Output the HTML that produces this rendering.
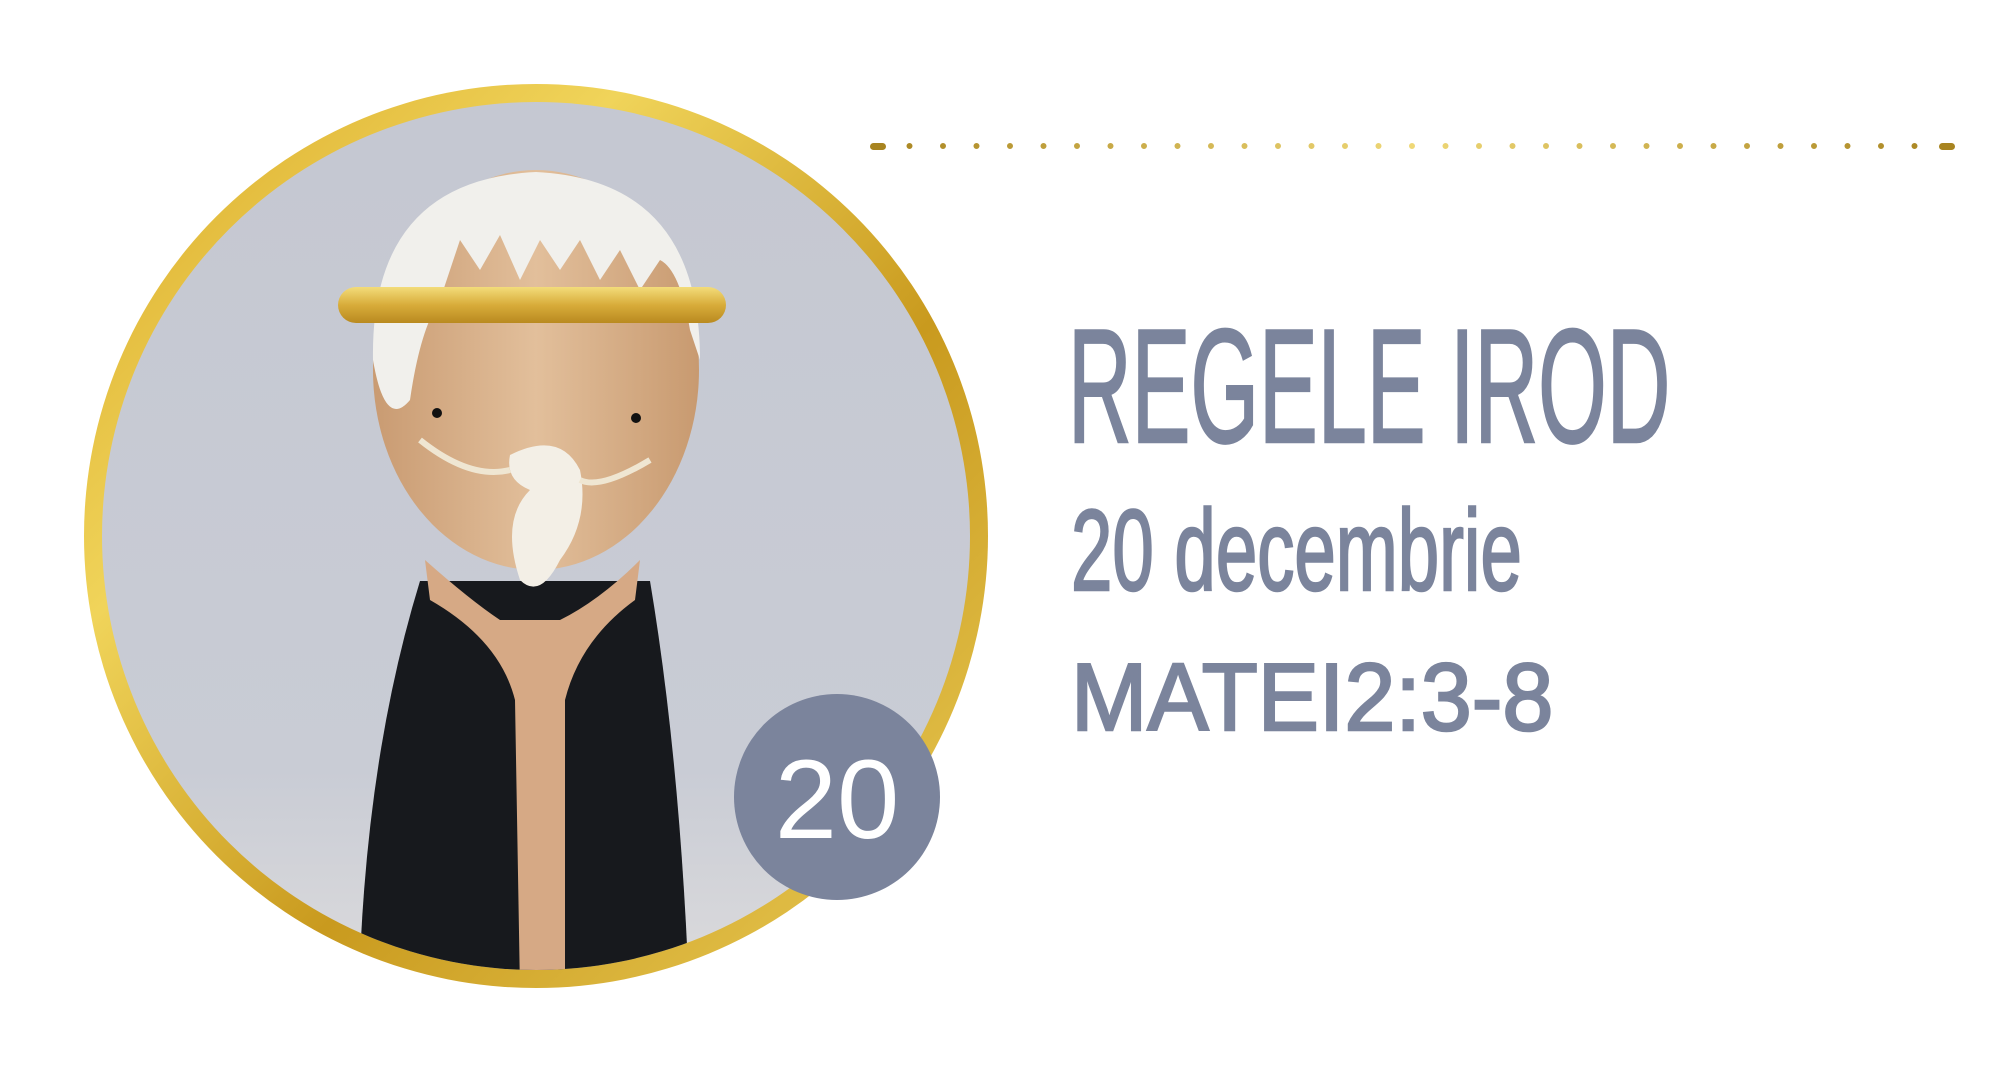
<!DOCTYPE html>
<html><head><meta charset="utf-8"><style>
html,body{margin:0;padding:0;background:#fff;width:2006px;height:1080px;overflow:hidden}
.t{position:absolute;color:#7b849c;font-family:"Liberation Sans Narrow","Liberation Sans",sans-serif;transform-origin:0 0;white-space:nowrap;-webkit-text-stroke:2.5px #7b849c}
</style></head><body>
<svg width="2006" height="1080" style="position:absolute;left:0;top:0">
<defs>
<linearGradient id="g" x1="0" y1="0" x2="1" y2="1">
<stop offset="0" stop-color="#d9a826"/><stop offset="0.3" stop-color="#f0d45a"/><stop offset="0.6" stop-color="#c99a1e"/><stop offset="1" stop-color="#eccf5a"/></linearGradient>
<linearGradient id="bg" x1="0" y1="0" x2="0" y2="1">
<stop offset="0" stop-color="#c4c7d1"/><stop offset="0.7" stop-color="#c9ccd5"/><stop offset="1" stop-color="#e6e3e0"/></linearGradient>
<linearGradient id="wood" x1="0" y1="0" x2="1" y2="0">
<stop offset="0" stop-color="#c99b72"/><stop offset="0.5" stop-color="#e2bf9b"/><stop offset="1" stop-color="#c89a70"/></linearGradient>
<linearGradient id="band" x1="0" y1="0" x2="0" y2="1">
<stop offset="0" stop-color="#f3dc7a"/><stop offset="0.5" stop-color="#d8ac3a"/><stop offset="1" stop-color="#b98a20"/></linearGradient>
<clipPath id="c"><circle cx="536" cy="536" r="434"/></clipPath>
<linearGradient id="dl" gradientUnits="userSpaceOnUse" x1="870" y1="0" x2="1955" y2="0"><stop offset="0" stop-color="#a88420"/><stop offset="0.5" stop-color="#efd877"/><stop offset="1" stop-color="#a88420"/></linearGradient>
</defs>
<circle cx="536" cy="536" r="452" fill="url(#g)"/>
<g clip-path="url(#c)">
<rect x="0" y="0" width="1100" height="1100" fill="url(#bg)"/>
<path d="M420 581 L650 581 Q680 760 689 990 L359 990 Q365 760 420 581Z" fill="#17191d"/>
<path d="M425 560 Q470 600 500 620 L560 620 Q600 600 640 560 L635 600 Q580 640 565 700 L565 990 L520 990 L515 700 Q500 640 430 600Z" fill="#d6a985"/>
<ellipse cx="536" cy="370" rx="163" ry="200" fill="url(#wood)"/>
<path d="M373 360 Q370 180 536 172 Q700 180 700 360 L690 330 Q680 270 660 260 L640 290 L620 250 L600 280 L580 240 L560 270 L540 240 L520 280 L500 235 L480 270 L460 240 L440 300 Q420 330 410 400 Q385 430 373 360Z" fill="#f1f0ec"/>
<rect x="338" y="287" width="388" height="36" rx="18" fill="url(#band)"/>
<circle cx="437" cy="413" r="5" fill="#111"/><circle cx="636" cy="418" r="5" fill="#111"/>
<path d="M510 455 Q560 430 580 470 Q590 520 560 560 Q540 600 520 580 Q500 520 530 490 Q505 480 510 455Z" fill="#f3efe6"/>
<path d="M420 440 Q470 480 510 470 M650 460 Q600 490 580 480" stroke="#efe6d2" stroke-width="6" fill="none"/>
</g>
<circle cx="837" cy="797" r="103" fill="#7b849c"/>
<text x="837" y="838" text-anchor="middle" font-family="Liberation Sans,sans-serif" font-size="112" fill="#fff">20</text>
<line x1="876" y1="146" x2="1949" y2="146" stroke="url(#dl)" stroke-width="6" stroke-linecap="round" stroke-dasharray="0 33.5"/>
<rect x="870" y="143" width="16" height="7" rx="3.5" fill="#a88420"/><rect x="1939" y="143" width="16" height="7" rx="3.5" fill="#a88420"/>
</svg>
<div class="t" style="left:1068px;top:306px;font-size:162px;line-height:1;transform:scale(0.544,1)">REGELE IROD</div>
<div class="t" style="left:1071px;top:494px;font-size:115px;line-height:1;transform:scale(0.647,1)">20 decembrie</div>
<div class="t" style="left:1071px;top:650px;font-size:96px;line-height:1;transform:scale(0.955,1)">MATEI2:3-8</div>
</body></html>
